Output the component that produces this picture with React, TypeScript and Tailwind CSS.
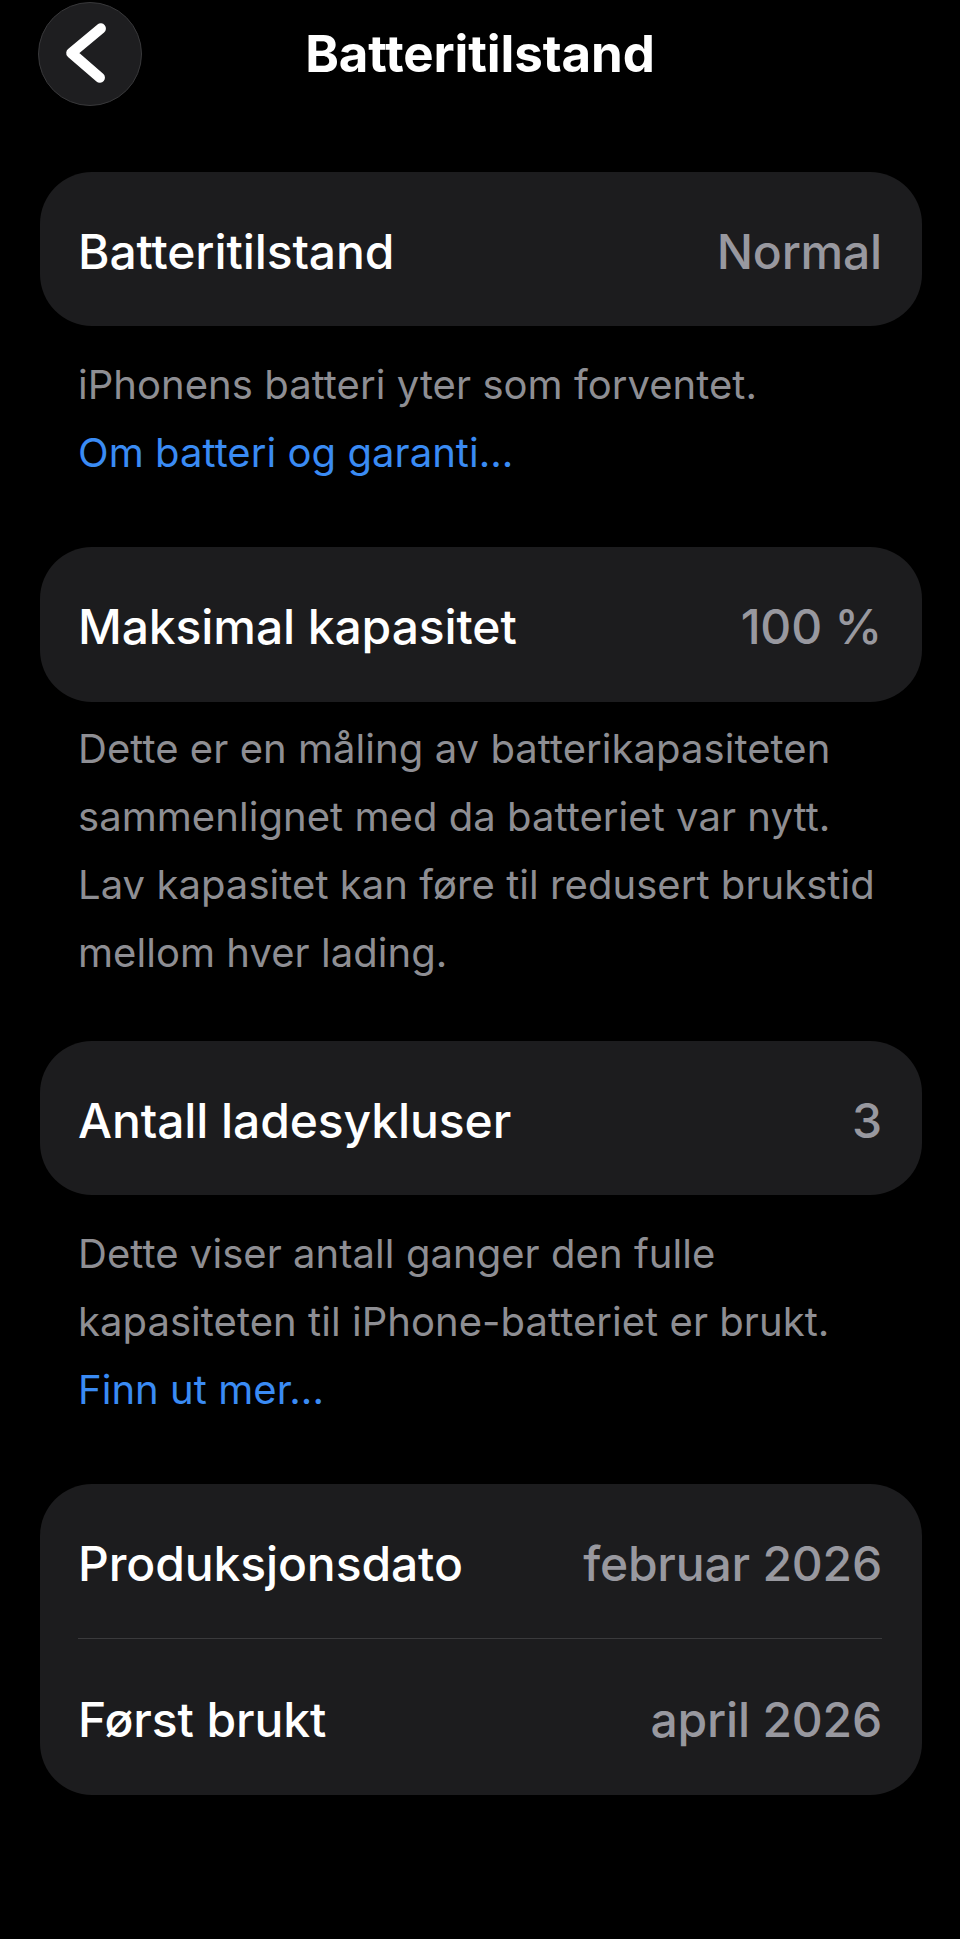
import type { ReactNode } from "react";

const font = { fontFamily: "Inter, 'Noto Sans', 'Liberation Sans', sans-serif" };

function BackButton() {
	return (
		<button
			type="button"
			aria-label="Tilbake"
			className="flex h-[104px] w-[104px] items-center justify-center rounded-full border border-[#38383a] bg-[#1e1e20]"
		>
			<svg width="104" height="104" viewBox="0 0 104 104" fill="none">
				<path
					d="M63 26 L33 51 L62 76"
					stroke="#ffffff"
					strokeWidth="10.5"
					strokeLinecap="round"
					strokeLinejoin="round"
				/>
			</svg>
		</button>
	);
}

function Row({ label, value, className = "h-[154px]" }: { label: string; value: string; className?: string }) {
	return (
		<div className={`flex items-center justify-between pt-[5px] ${className}`}>
			<span className="text-[48px] leading-[60px] font-medium tracking-[-0.1px] text-white">{label}</span>
			<span className="text-[48px] leading-[60px] font-medium tracking-[-0.2px] text-[#98989f]">{value}</span>
		</div>
	);
}

function Card({ children }: { children: ReactNode }) {
	return <div className="rounded-[52px] bg-[#1c1c1e] pr-[40px] pl-[38px]">{children}</div>;
}

function Footer({ children, className }: { children: ReactNode; className: string }) {
	return (
		<div className={`px-[38px] text-[40px] leading-[68px] tracking-[0.05px] text-[#8e8e93] ${className}`}>
			{children}
		</div>
	);
}

export default function App() {
	return (
		<div className="min-h-[1939px] w-full bg-black px-[38px] pt-[2px]" style={font}>
			<header className="grid grid-cols-[104px_1fr_104px] items-center">
				<BackButton />
				<h1 className="text-center text-[51px] leading-[60px] font-bold tracking-[-0.1px] text-white">
					Batteritilstand
				</h1>
				<div />
			</header>

			<main className="mt-[66px] pl-[2px]">
				<Card>
					<Row label="Batteritilstand" value="Normal" />
				</Card>
				<Footer className="mt-[25px] mb-[60px]">
					<p>iPhonens batteri yter som forventet.</p>
					<p className="text-[#3a8bf4]">Om batteri og garanti...</p>
				</Footer>

				<Card>
					<Row label="Maksimal kapasitet" value="100 %" className="h-[155px]" />
				</Card>
				<Footer className="mt-[13px] mb-[54px]">
					<p>
						Dette er en måling av batterikapasiteten sammenlignet med da batteriet var nytt. Lav kapasitet
						kan føre til redusert brukstid mellom hver lading.
					</p>
				</Footer>

				<Card>
					<Row label="Antall ladesykluser" value="3" />
				</Card>
				<Footer className="mt-[25px] mb-[60px]">
					<p>Dette viser antall ganger den fulle kapasiteten til iPhone-batteriet er brukt.</p>
					<p className="text-[#3a8bf4]">Finn ut mer...</p>
				</Footer>

				<Card>
					<Row label="Produksjonsdato" value="februar 2026" />
					<div className="h-px bg-[#3a3a3c]" />
					<Row label="Først brukt" value="april 2026" className="h-[156px]" />
				</Card>
			</main>
		</div>
	);
}
